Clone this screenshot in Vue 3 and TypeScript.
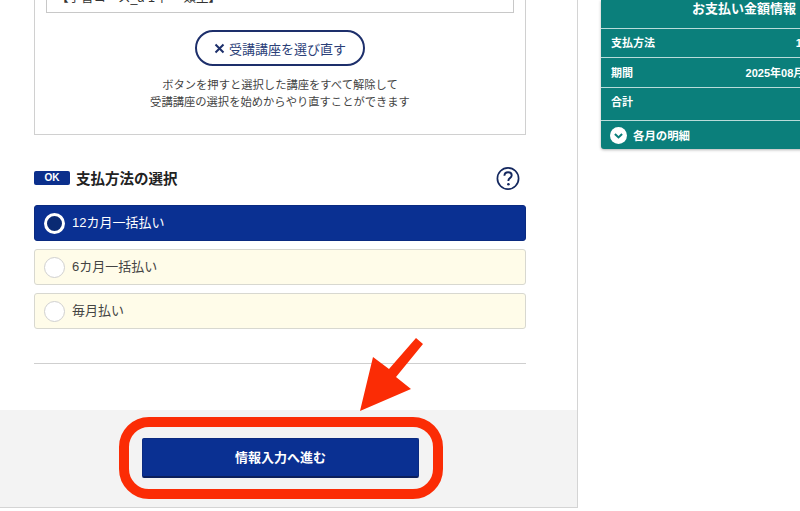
<script setup lang="ts">
interface PayOption {
  label: string;
  selected: boolean;
}

const options: PayOption[] = [
  { label: "12カ月一括払い", selected: true },
  { label: "6カ月一括払い", selected: false },
  { label: "毎月払い", selected: false },
];

const rows = [
  { name: "支払方法", value: "12カ月一括払い" },
  { name: "期間", value: "2025年08月〜2026年07月" },
  { name: "合計", value: "" },
];
</script>

<template>
  <div class="page">
    <main class="card">
      <div class="card-body">
        <section class="course-panel">
          <div class="course-box"><span class="course-name">【学習コース_α 1年 一類型】</span></div>
          <button class="reset-btn" type="button">
            <svg width="11" height="11" viewBox="0 0 11 11" fill="none">
              <path d="M1.5 1.5l8 8M9.5 1.5l-8 8" stroke="#1d2f6b" stroke-width="2" />
            </svg>
            受講講座を選び直す
          </button>
          <p class="note">
            ボタンを押すと選択した講座をすべて解除して<br />
            受講講座の選択を始めからやり直すことができます
          </p>
        </section>

        <div class="pay-head">
          <span class="ok-badge">OK</span>
          <h2>支払方法の選択</h2>
          <svg class="help" width="25" height="25" viewBox="0 0 25 25" fill="none">
            <circle cx="12" cy="12.5" r="10.6" stroke="#14285f" stroke-width="1.7" />
            <path
              d="M8.4 9.8c.1-2.2 1.6-3.5 3.7-3.5 2.1 0 3.6 1.2 3.6 3 0 1.4-.8 2.1-1.8 2.8-1 .7-1.5 1.2-1.5 2.5v.5"
              stroke="#14285f"
              stroke-width="1.9"
            />
            <circle cx="12.4" cy="18.3" r="1.3" fill="#14285f" />
          </svg>
        </div>

        <div class="options">
          <div
            v-for="opt in options"
            :key="opt.label"
            class="option"
            :class="{ selected: opt.selected }"
          >
            <span class="radio"></span>
            <span class="option-label">{{ opt.label }}</span>
          </div>
        </div>

        <hr class="divider" />
      </div>

      <footer class="card-foot">
        <button class="next-btn" type="button">情報入力へ進む</button>
      </footer>
    </main>

    <aside class="summary">
      <div class="summary-title">お支払い金額情報</div>
      <div v-for="row in rows" :key="row.name" class="summary-row">
        <span>{{ row.name }}</span>
        <span>{{ row.value }}</span>
      </div>
      <div class="summary-detail">
        <svg width="17" height="17" viewBox="0 0 18 18" fill="none">
          <circle cx="9" cy="9" r="9" fill="#fff" />
          <path d="M5.2 7.4L9 11l3.800-3.600" stroke="#0b7f7b" stroke-width="2.2" />
        </svg>
        各月の明細
      </div>
    </aside>

    <svg class="callout" width="800" height="511" viewBox="0 0 800 511" fill="none">
      <rect x="124" y="422" width="314" height="72" rx="25" stroke="#fb2c05" stroke-width="10" />
      <path d="M416 338L423 344L396 377L411 389L360 411L373 357L389 369Z" fill="#fb2c05" />
    </svg>
  </div>
</template>

<style scoped>
.page {
  position: relative;
  display: flex;
  align-items: flex-start;
  width: 800px;
  height: 511px;
  overflow: hidden;
  background: #fff;
  font-family: "Liberation Sans", "Noto Sans CJK JP", sans-serif;
  color: #333;
}

.card {
  flex: 0 0 578px;
  height: 508px;
  display: flex;
  flex-direction: column;
  border-right: 1px solid #d4d4d4;
  border-bottom: 1px solid #d4d4d4;
  box-sizing: border-box;
}

.card-body {
  flex: 1;
  padding: 0 51px 0 34px;
}

.course-panel {
  display: flex;
  flex-direction: column;
  align-items: center;
  height: 135px;
  box-sizing: border-box;
  border: 1px solid #d0d0d0;
  border-top: 0;
  padding: 0 11px;
}

.course-box {
  align-self: stretch;
  height: 13px;
  overflow: hidden;
  box-sizing: border-box;
  border: 1px solid #c8c8c8;
  border-top: 0;
  padding-left: 9px;
}

.course-name {
  display: block;
  margin-top: -9px;
  font-size: 12.5px;
  line-height: 14px;
}

.reset-btn {
  display: flex;
  align-items: center;
  justify-content: center;
  gap: 4px;
  width: 170px;
  height: 36px;
  margin-top: 17px;
  background: #fff;
  border: 2px solid #1d2f6b;
  border-radius: 18px;
  color: #2b4078;
  font: inherit;
  font-size: 13px;
}

.note {
  margin: 11px 0 0;
  font-size: 11.3px;
  line-height: 17px;
  text-align: center;
  color: #444;
}

.pay-head {
  display: flex;
  align-items: center;
  height: 28px;
  margin-top: 29px;
}

.ok-badge {
  width: 36px;
  height: 14px;
  margin-right: 6px;
  border-radius: 2px;
  background: #0b2f8c;
  color: #fff;
  font-size: 10px;
  font-weight: 700;
  line-height: 14px;
  text-align: center;
}

.pay-head h2 {
  margin: 0;
  padding-bottom: 2px;
  font-size: 14.5px;
  font-weight: 700;
  color: #222;
}

.help {
  margin-left: auto;
  margin-right: 5.5px;
}

.options {
  display: flex;
  flex-direction: column;
  gap: 8px;
  margin-top: 13px;
}

.option {
  display: flex;
  align-items: center;
  gap: 7px;
  height: 36px;
  box-sizing: border-box;
  padding-left: 9px;
  background: #fffce9;
  border: 1px solid #d8d8d0;
  border-radius: 3px;
  font-size: 13px;
  color: #444;
}

.option-label {
  padding-bottom: 4px;
}

.option.selected {
  background: #0a3092;
  border-color: #0a2a80;
  color: #fff;
}

.radio {
  width: 21px;
  height: 21px;
  box-sizing: border-box;
  border: 1.5px solid #d0d0d0;
  border-radius: 50%;
  background: #fff;
}

.selected .radio {
  border: 3.5px solid #fff;
  background: #0a2a73;
}

.divider {
  margin: 34px 0 0;
  border: 0;
  border-top: 1px solid #cfcfcf;
}

.card-foot {
  display: flex;
  align-items: center;
  height: 97px;
  box-sizing: border-box;
  padding-left: 142px;
  background: #f3f3f3;
}

.next-btn {
  width: 277px;
  height: 40px;
  margin-top: -1px;
  padding-bottom: 3px;
  background: #0a3092;
  border: 1px solid #0a2a80;
  border-bottom: 2px solid #0b1f5c;
  border-radius: 2px;
  color: #fff;
  font: inherit;
  font-size: 13px;
  font-weight: 700;
}

.summary {
  flex: 0 0 286px;
  margin-left: 23px;
  border-radius: 0 0 3px 3px;
  background: #0b7f7b;
  color: #fff;
  font-size: 11px;
  font-weight: 700;
  box-shadow: 0 1px 3px rgba(0, 0, 0, 0.3);
}

.summary-title {
  height: 28px;
  font-size: 13px;
  line-height: 17px;
  text-align: center;
}

.summary-row {
  display: flex;
  align-items: center;
  justify-content: space-between;
  height: 29px;
  padding: 0 13px 2px 10px;
  box-sizing: border-box;
  border-top: 1px solid #b9dcda;
}

.summary-row:nth-of-type(3) {
  height: 30px;
}

.summary-row:nth-of-type(4) {
  height: 33px;
  padding-bottom: 7px;
}

.summary-detail {
  display: flex;
  align-items: center;
  gap: 6px;
  height: 29px;
  box-sizing: border-box;
  padding-left: 9px;
  border-top: 1px solid #b9dcda;
  font-size: 11.4px;
}

.callout {
  position: absolute;
  top: 0;
  left: 0;
  pointer-events: none;
}
</style>

<style>
html,
body {
  margin: 0;
  background: #fff;
}
</style>
